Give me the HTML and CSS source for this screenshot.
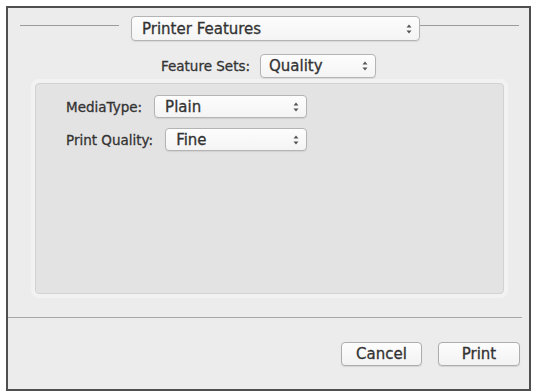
FILE: index.html
```html
<!DOCTYPE html>
<html lang="en">
<head>
  <meta charset="UTF-8">
  <title>Printer Features</title>
  <link rel="stylesheet" href="styles.css">
</head>
<body>
  <div class="window">
    <!-- Pane selector -->
    <div class="pane-header">
      <span class="rule"></span>
      <div class="popup popup-pane">
        <span>Printer Features</span>
        <svg class="arrows" width="6" height="10" viewBox="0 0 6 10"><path d="M3 0.5L5.5 3.5H0.5Z M3 9.5L5.5 6.5H0.5Z"/></svg>
      </div>
      <span class="rule"></span>
    </div>

    <div class="feature-row">
      <span class="label">Feature Sets:</span>
      <div class="popup popup-set">
        <span>Quality</span>
        <svg class="arrows" width="6" height="10" viewBox="0 0 6 10"><path d="M3 0.5L5.5 3.5H0.5Z M3 9.5L5.5 6.5H0.5Z"/></svg>
      </div>
    </div>

    <!-- Options group -->
    <div class="group">
      <div class="field-row">
        <span class="label">MediaType:</span>
        <div class="popup popup-field">
          <span>Plain</span>
          <svg class="arrows" width="6" height="10" viewBox="0 0 6 10"><path d="M3 0.5L5.5 3.5H0.5Z M3 9.5L5.5 6.5H0.5Z"/></svg>
        </div>
      </div>
      <div class="field-row">
        <span class="label">Print Quality:</span>
        <div class="popup popup-field">
          <span>Fine</span>
          <svg class="arrows" width="6" height="10" viewBox="0 0 6 10"><path d="M3 0.5L5.5 3.5H0.5Z M3 9.5L5.5 6.5H0.5Z"/></svg>
        </div>
      </div>
    </div>

    <div class="footer-rule"></div>

    <div class="buttons">
      <button class="btn btn-cancel">Cancel</button>
      <button class="btn btn-print">Print</button>
    </div>
  </div>
</body>
</html>
```

FILE: styles.css
```css
* {
  margin: 0;
  padding: 0;
  box-sizing: border-box;
}

body {
  background-color: #fff;
  font-family: 'DejaVu Sans', 'Liberation Sans', sans-serif;
  color: #333;
  overflow: hidden;
}

.window {
  display: flex;
  flex-direction: column;
  width: 525px;
  height: 385px;
  margin: 6px 0 0 6px;
  background-color: #ececec;
  border: 2px solid #4f4f4f;
}

.label {
  font-size: 13.5px;
  -webkit-text-stroke: 0.3px #333;
  white-space: nowrap;
}

.pane-header {
  display: flex;
  align-items: flex-start;
  margin: 8px 10px 0 12px;
}

.rule {
  flex: 1;
  height: 1px;
  margin-top: 9px;
  background-color: #9c9c9c;
}

.popup {
  display: flex;
  align-items: center;
  justify-content: space-between;
  padding: 0 7px 0 10px;
  background: linear-gradient(#fdfdfd, #f4f4f4);
  border: 1px solid #b4b4b4;
  border-radius: 4px;
  box-shadow: 0 1px 1px rgba(0, 0, 0, 0.08);
  font-size: 15px;
  -webkit-text-stroke: 0.3px #333;
}

.arrows {
  fill: #555;
}

.popup-pane {
  width: 289px;
  height: 25px;
  margin-left: 12px;
}

.feature-row {
  display: flex;
  align-items: center;
  justify-content: center;
  gap: 10px;
  margin-top: 13px;
}

.popup-set {
  width: 116px;
  height: 24px;
  padding-left: 8px;
}

.group {
  display: flex;
  flex-direction: column;
  gap: 10px;
  height: 211px;
  margin: 5px 25px 0 27px;
  padding: 11px 0 0 30px;
  background-color: #e3e3e3;
  border: 1px solid #d2d2d2;
  border-radius: 4px;
  box-shadow: 0 0 0 4px rgba(255, 255, 255, 0.35);
}

.field-row {
  display: flex;
  align-items: center;
  gap: 12px;
  width: 241px;
}

.popup-field {
  flex: 1;
  height: 23px;
}

.footer-rule {
  height: 1px;
  margin: 23px 7px 0 0;
  background-color: #a6a6a6;
}

.buttons {
  display: flex;
  justify-content: flex-end;
  gap: 16px;
  margin-top: 24px;
  padding-right: 9px;
}

.btn {
  height: 24px;
  background: linear-gradient(#fdfdfd, #f2f2f2);
  border: 1px solid #adadad;
  border-radius: 4px;
  box-shadow: 0 1px 1px rgba(0, 0, 0, 0.1);
  font-family: 'DejaVu Sans', 'Liberation Sans', sans-serif;
  font-size: 15px;
  color: #333;
  -webkit-text-stroke: 0.3px #333;
}

.btn-cancel {
  width: 81px;
}

.btn-print {
  width: 82px;
}
```
